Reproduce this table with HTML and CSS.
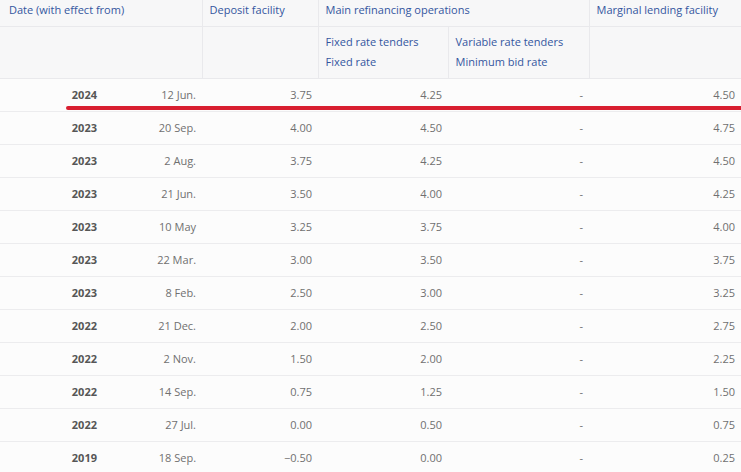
FILE: index.html
```html
<!DOCTYPE html>
<html lang="en">
<head>
<meta charset="utf-8">
<title>Key ECB interest rates</title>
<link rel="stylesheet" href="styles.css">
</head>
<body>
<div class="wrap">
<table class="rates">
  <colgroup>
    <col class="c-year"><col class="c-day"><col class="c-dep"><col class="c-fix"><col class="c-var"><col class="c-mlf">
  </colgroup>
  <thead>
    <tr class="h1">
      <th colspan="2" class="first">Date (with effect from)</th>
      <th>Deposit facility</th>
      <th colspan="2">Main refinancing operations</th>
      <th class="last">Marginal lending facility</th>
    </tr>
    <tr class="h2">
      <th colspan="2" class="first"></th>
      <th></th>
      <th><span>Fixed rate tenders</span><span>Fixed rate</span></th>
      <th><span>Variable rate tenders</span><span>Minimum bid rate</span></th>
      <th class="last"></th>
    </tr>
  </thead>
  <tbody>
    <tr><td class="yr">2024</td><td>12 Jun.</td><td>3.75</td><td>4.25</td><td>-</td><td>4.50</td></tr>
    <tr><td class="yr">2023</td><td>20 Sep.</td><td>4.00</td><td>4.50</td><td>-</td><td>4.75</td></tr>
    <tr><td class="yr">2023</td><td>2 Aug.</td><td>3.75</td><td>4.25</td><td>-</td><td>4.50</td></tr>
    <tr><td class="yr">2023</td><td>21 Jun.</td><td>3.50</td><td>4.00</td><td>-</td><td>4.25</td></tr>
    <tr><td class="yr">2023</td><td>10 May</td><td>3.25</td><td>3.75</td><td>-</td><td>4.00</td></tr>
    <tr><td class="yr">2023</td><td>22 Mar.</td><td>3.00</td><td>3.50</td><td>-</td><td>3.75</td></tr>
    <tr><td class="yr">2023</td><td>8 Feb.</td><td>2.50</td><td>3.00</td><td>-</td><td>3.25</td></tr>
    <tr><td class="yr">2022</td><td>21 Dec.</td><td>2.00</td><td>2.50</td><td>-</td><td>2.75</td></tr>
    <tr><td class="yr">2022</td><td>2 Nov.</td><td>1.50</td><td>2.00</td><td>-</td><td>2.25</td></tr>
    <tr><td class="yr">2022</td><td>14 Sep.</td><td>0.75</td><td>1.25</td><td>-</td><td>1.50</td></tr>
    <tr><td class="yr">2022</td><td>27 Jul.</td><td>0.00</td><td>0.50</td><td>-</td><td>0.75</td></tr>
    <tr><td class="yr">2019</td><td>18 Sep.</td><td>&minus;0.50</td><td>0.00</td><td>-</td><td>0.25</td></tr>
  </tbody>
</table>
<div class="mark"></div>
</div>
</body>
</html>
```
FILE: styles.css
```css
html, body {
  margin: 0;
  padding: 0;
  background: #fcfcfc;
}
body {
  font-family: "Open Sans", "Liberation Sans", sans-serif;
  font-size: 11px;
  color: #707070;
  overflow: hidden;
}
.wrap {
  position: relative;
  width: 741px;
}
.rates {
  border-collapse: collapse;
  table-layout: fixed;
  width: 741px;
}
.c-year { width: 103px; }
.c-day { width: 99px; }
.c-dep { width: 116px; }
.c-fix { width: 130px; }
.c-var { width: 141px; }
.c-mlf { width: 152px; }

.rates th {
  background: #f7f7f8;
  color: #34569f;
  font-weight: 400;
  text-align: left;
  vertical-align: top;
  padding: 0 7px;
  border-left: 1px solid #e9e9ec;
  border-right: 1px solid #e9e9ec;
  border-bottom: 1px solid #e9e9ec;
}
.rates th.first { border-left: none; padding-left: 9px; }
.rates th.last { border-right: none; }
.h1 th {
  height: 26px;
  line-height: 20px;
  box-sizing: border-box;
}
.h2 th {
  height: 52px;
  box-sizing: border-box;
  padding-top: 5px;
  line-height: 20px;
}
.h2 th span { display: block; }

.rates td {
  height: 33px;
  box-sizing: border-box;
  padding: 0 6px 0 6px;
  text-align: right;
  white-space: nowrap;
  border-bottom: 1px solid #ececee;
  background: #fcfcfc;
}
.rates td.yr {
  font-weight: 700;
  color: #565656;
  padding-right: 6px;
}
.rates tr:last-child td { border-bottom: none; }

.mark {
  position: absolute;
  left: 66px;
  top: 106px;
  width: 690px;
  height: 4px;
  background: #d81e30;
  border-radius: 2px;
}
```
